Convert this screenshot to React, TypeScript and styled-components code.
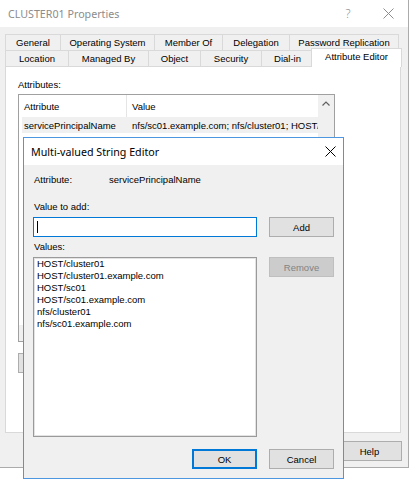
import React from "react";
import styled, { createGlobalStyle, css } from "styled-components";

const GlobalStyle = createGlobalStyle`
  html, body { margin: 0; padding: 0; background: #ffffff; }
  body {
    font-family: "Liberation Sans", Arial, sans-serif;
    font-size: 9.5px;
    color: #000;
  }
  * { box-sizing: border-box; }
`;

const Screen = styled.div`
  position: relative;
  width: 411px;
  height: 480px;
  background: #fff;
  overflow: hidden;
`;

const Window = styled.div`
  width: 409px;
  height: 468px;
  background: #f0f0f0;
  border-right: 1px solid #ababab;
  border-bottom: 1px solid #ababab;
  display: flex;
  flex-direction: column;
`;

const TitleBar = styled.div<{ $active?: boolean }>`
  height: 27px;
  flex: none;
  background: #fff;
  display: flex;
  align-items: center;
  padding-left: ${(p) => (p.$active ? 7 : 8)}px;
  font-family: "Noto Sans", "Open Sans", sans-serif;
  font-size: 10.7px;
  color: ${(p) => (p.$active ? "#000" : "#8c8c8c")};
`;

const TitleText = styled.div`
  flex: 1;
  white-space: nowrap;
`;

const TitleButton = styled.div<{ $w: number; $color: string }>`
  width: ${(p) => p.$w}px;
  height: 100%;
  display: flex;
  align-items: center;
  justify-content: center;
  color: ${(p) => p.$color};
  font-family: "Noto Sans", sans-serif;
  font-size: 12px;
  font-weight: 300;
`;

const CloseIcon = ({ color }: { color: string }) => (
  <svg width="11" height="11" viewBox="0 0 11 11">
    <path d="M0.5 0.5 L10.5 10.5 M10.5 0.5 L0.5 10.5" stroke={color} strokeWidth="1" />
  </svg>
);

const Content = styled.div`
  flex: 1;
  display: flex;
  flex-direction: column;
  padding: 7px 0 0 5px;
`;

const TabStrip = styled.div`
  display: flex;
  flex-direction: column;
`;

const TabRow = styled.div`
  display: flex;
  height: 16px;
`;

const Tab = styled.div<{ $w: number; $last?: boolean; $selected?: boolean }>`
  width: ${(p) => p.$w}px;
  height: 16px;
  border-top: 1px solid #d9d9d9;
  border-left: 1px solid #d9d9d9;
  border-right: ${(p) => (p.$last ? "1px solid #d9d9d9" : "none")};
  background: #f0f0f0;
  display: flex;
  align-items: center;
  justify-content: center;
  white-space: nowrap;
  ${(p) =>
    p.$selected &&
    css`
      width: ${p.$w + 4}px;
      height: 19px;
      margin-top: -2px;
      margin-left: -2px;
      border-right: 1px solid #d9d9d9;
      background: #fff;
      padding-bottom: 3px;
      position: relative;
      z-index: 2;
    `}
`;

const Panel = styled.div`
  width: 396px;
  height: 367px;
  border: 1px solid #d9d9d9;
  background: #fff;
  padding: 12px 0 0 12px;
  display: flex;
  flex-direction: column;
  position: relative;
  z-index: 1;
`;

const Label = styled.div`
  height: 12px;
  line-height: 12px;
  white-space: nowrap;
`;

const ListView = styled.div`
  margin-top: 3px;
  width: 317px;
  height: 248px;
  border: 1px solid #a0a0a0;
  display: grid;
  grid-template-columns: 1fr 16px;
  grid-template-rows: 1fr 16px;
  background: #fff;
`;

const ListBody = styled.div`
  overflow: hidden;
`;

const HeaderRow = styled.div`
  display: flex;
  height: 22px;
  align-items: stretch;
`;

const HeaderCell = styled.div<{ $w?: number }>`
  ${(p) => (p.$w ? `width: ${p.$w}px;` : "flex: 1;")}
  display: flex;
  align-items: center;
  padding-left: 5px;
  border-right: ${(p) => (p.$w ? "1px solid #e5e5e5" : "none")};
  white-space: nowrap;
`;

const DataRow = styled.div<{ $highlight?: boolean }>`
  display: flex;
  height: 16px;
  align-items: center;
  margin-left: 3px;
  background: ${(p) => (p.$highlight ? "#f0f0f0" : "transparent")};
  white-space: nowrap;
  overflow: hidden;
`;

const DataCell = styled.div<{ $w?: number }>`
  ${(p) => (p.$w ? `width: ${p.$w}px; flex: none;` : "flex: 1;")}
  padding-left: ${(p) => (p.$w ? 2 : 5)}px;
  overflow: hidden;
`;

const VScroll = styled.div`
  background: #f0f0f0;
  display: flex;
  flex-direction: column;
`;

const ScrollArrow = styled.div`
  height: 17px;
  display: flex;
  align-items: center;
  justify-content: center;
`;

const HScroll = styled.div`
  background: #f0f0f0;
`;

const Corner = styled.div`
  background: #f0f0f0;
`;

const ButtonRow = styled.div<{ $w?: number; $mt: number; $end?: boolean }>`
  display: flex;
  ${(p) => (p.$w ? `width: ${p.$w}px;` : "")}
  margin-top: ${(p) => p.$mt}px;
  justify-content: ${(p) => (p.$end ? "flex-end" : "space-between")};
  gap: 6px;
`;

const Button = styled.div<{ $default?: boolean; $disabled?: boolean }>`
  width: 65px;
  height: 20px;
  flex: none;
  display: flex;
  align-items: center;
  justify-content: center;
  background: ${(p) => (p.$disabled ? "#cccccc" : "#e1e1e1")};
  border: 1px solid ${(p) => (p.$default ? "#0078d7" : p.$disabled ? "#bfbfbf" : "#adadad")};
  box-shadow: ${(p) => (p.$default ? "inset 0 0 0 1px #0078d7" : "none")};
  color: ${(p) => (p.$disabled ? "#838383" : "#000")};
  white-space: nowrap;
`;

const MainButtons = styled(ButtonRow)`
  padding-right: 6px;
`;

/* Dialog */
const Dialog = styled.div`
  position: absolute;
  left: 23px;
  top: 137px;
  width: 321px;
  height: 342px;
  border: 1px solid #4d96e0;
  background: #f0f0f0;
  display: flex;
  flex-direction: column;
  z-index: 10;
`;

const DialogBody = styled.div`
  flex: 1;
  padding: 9px 0 0 9px;
  display: grid;
  grid-template-columns: 224px 65px;
  column-gap: 12px;
  align-content: start;
`;

const FullRow = styled.div<{ $mt?: number }>`
  grid-column: 1 / -1;
  margin-top: ${(p) => p.$mt ?? 0}px;
  display: flex;
  padding-left: 1px;
`;

const LabelCol = styled.div<{ $w?: number }>`
  ${(p) => (p.$w ? `width: ${p.$w}px;` : "")}
  height: 12px;
  line-height: 12px;
  white-space: nowrap;
`;

const TextInput = styled.div<{ $mt: number }>`
  margin-top: ${(p) => p.$mt}px;
  height: 20px;
  border: 1px solid #0078d7;
  background: #fff;
  display: flex;
  align-items: center;
  padding-left: 3px;
`;

const Caret = styled.div`
  width: 1px;
  height: 12px;
  background: #000;
`;

const Cell = styled.div<{ $mt: number; $end?: boolean }>`
  margin-top: ${(p) => p.$mt}px;
  display: flex;
  justify-content: ${(p) => (p.$end ? "flex-end" : "flex-start")};
  align-items: flex-start;
`;

const ValuesList = styled.div<{ $mt: number }>`
  margin-top: ${(p) => p.$mt}px;
  height: 180px;
  background: #fff;
  border: 1px solid #9a9a9a;
  box-shadow: inset 0 0 0 1px #e3e3e3;
  padding: 0 3px;
`;

const ValueItem = styled.div`
  height: 12px;
  line-height: 12px;
  white-space: nowrap;
`;

const values = [
  "HOST/cluster01",
  "HOST/cluster01.example.com",
  "HOST/sc01",
  "HOST/sc01.example.com",
  "nfs/cluster01",
  "nfs/sc01.example.com",
];

const row1 = [
  { t: "General", w: 55 },
  { t: "Operating System", w: 94 },
  { t: "Member Of", w: 68 },
  { t: "Delegation", w: 67 },
  { t: "Password Replication", w: 110 },
];

const row2 = [
  { t: "Location", w: 63 },
  { t: "Managed By", w: 80 },
  { t: "Object", w: 52 },
  { t: "Security", w: 61 },
  { t: "Dial-in", w: 52 },
  { t: "Attribute Editor", w: 87, sel: true },
];

export default function App() {
  return (
    <Screen>
      <GlobalStyle />
      <Window>
        <TitleBar>
          <TitleText>CLUSTER01 Properties</TitleText>
          <TitleButton $w={40} $color="#8c8c8c">?</TitleButton>
          <TitleButton $w={40} $color="#8c8c8c">
            <CloseIcon color="#8c8c8c" />
          </TitleButton>
        </TitleBar>
        <Content>
          <TabStrip>
            <TabRow>
              {row1.map((t, i) => (
                <Tab key={t.t} $w={t.w} $last={i === row1.length - 1}>
                  {t.t}
                </Tab>
              ))}
            </TabRow>
            <TabRow>
              {row2.map((t) => (
                <Tab key={t.t} $w={t.w} $selected={t.sel}>
                  {t.t}
                </Tab>
              ))}
            </TabRow>
          </TabStrip>
          <Panel>
            <Label>Attributes:</Label>
            <ListView>
              <ListBody>
                <HeaderRow>
                  <HeaderCell $w={108}>Attribute</HeaderCell>
                  <HeaderCell>Value</HeaderCell>
                </HeaderRow>
                <DataRow $highlight>
                  <DataCell $w={105}>servicePrincipalName</DataCell>
                  <DataCell>nfs/sc01.example.com; nfs/cluster01; HOST/sc01.example.com</DataCell>
                </DataRow>
                <DataRow>
                  <DataCell $w={105}>showInAdvancedViewOnly</DataCell>
                  <DataCell>TRUE</DataCell>
                </DataRow>
              </ListBody>
              <VScroll>
                <ScrollArrow>
                  <svg width="8" height="5" viewBox="0 0 8 5">
                    <path d="M0.5 4.5 L4 1 L7.5 4.5" stroke="#606060" strokeWidth="1.2" fill="none" />
                  </svg>
                </ScrollArrow>
              </VScroll>
              <HScroll />
              <Corner />
            </ListView>
            <ButtonRow $w={317} $mt={11}>
              <Button>Edit</Button>
              <Button>Filter</Button>
            </ButtonRow>
          </Panel>
          <MainButtons $mt={8} $end>
            <Button $default>OK</Button>
            <Button>Cancel</Button>
            <Button $disabled>Apply</Button>
            <Button>Help</Button>
          </MainButtons>
        </Content>
      </Window>

      <Dialog>
        <TitleBar $active>
          <TitleText>Multi-valued String Editor</TitleText>
          <TitleButton $w={26} $color="#000">
            <CloseIcon color="#000" />
          </TitleButton>
        </TitleBar>
        <DialogBody>
          <FullRow>
            <LabelCol $w={75}>Attribute:</LabelCol>
            <LabelCol>servicePrincipalName</LabelCol>
          </FullRow>
          <FullRow $mt={15}>
            <LabelCol>Value to add:</LabelCol>
          </FullRow>
          <TextInput $mt={4}>
            <Caret />
          </TextInput>
          <Cell $mt={4}>
            <Button>Add</Button>
          </Cell>
          <FullRow $mt={4}>
            <LabelCol>Values:</LabelCol>
          </FullRow>
          <ValuesList $mt={4}>
            {values.map((v) => (
              <ValueItem key={v}>{v}</ValueItem>
            ))}
          </ValuesList>
          <Cell $mt={4}>
            <Button $disabled>Remove</Button>
          </Cell>
          <Cell $mt={12} $end>
            <Button $default>OK</Button>
          </Cell>
          <Cell $mt={12}>
            <Button>Cancel</Button>
          </Cell>
        </DialogBody>
      </Dialog>
    </Screen>
  );
}
